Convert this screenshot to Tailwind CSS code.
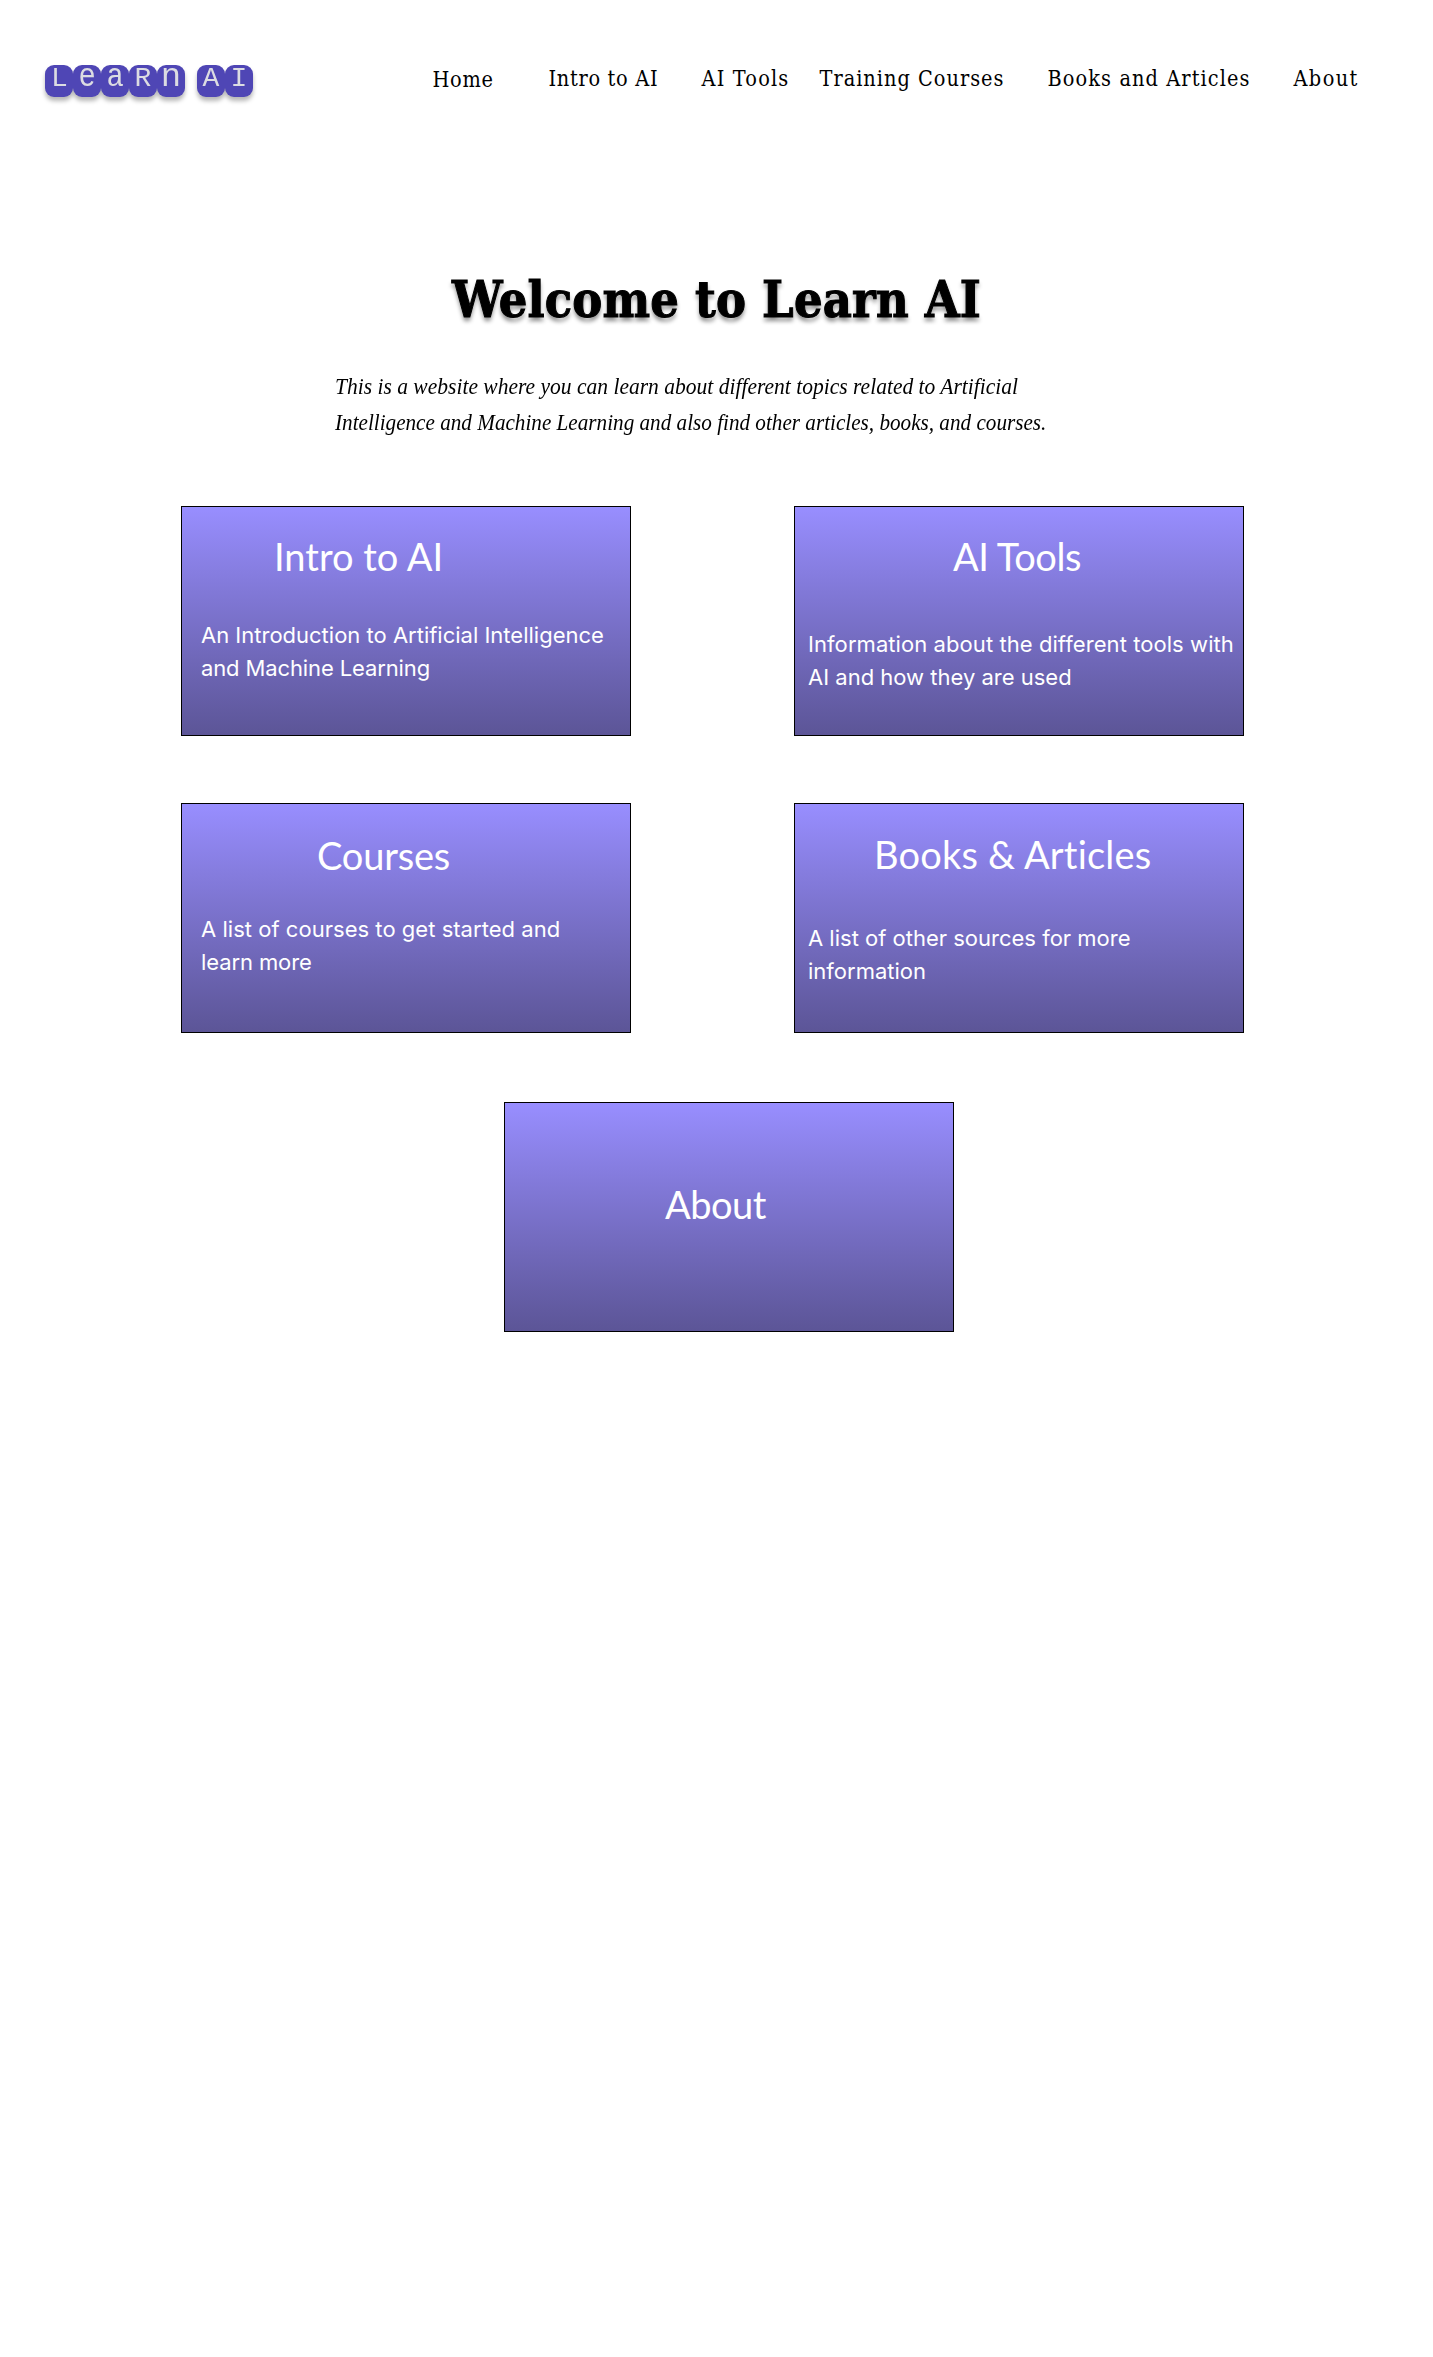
<!DOCTYPE html>
<html lang="en">
<head>
<meta charset="utf-8">
<title>Learn AI</title>
<script src="https://cdn.jsdelivr.net/npm/@tailwindcss/browser@4"></script>
</head>
<body class="min-h-[2357px] bg-white text-black">
<header class="flex items-start pt-[63px] pl-[45px]">
  <a class="mt-[2px] flex w-[208px] font-['Liberation_Mono',monospace] text-[28px] leading-[28px] text-[#dcdce2] drop-shadow-[0_4px_2px_rgba(0,0,0,0.28)]">
    <span class="h-8 w-7 rounded-[9px] bg-[#4f46b5] pl-[1px] text-center">L</span>
    <span class="h-8 w-7 rounded-[9px] bg-[#4f46b5] text-center text-[34px] leading-[25px]"><span class="inline-block scale-x-[0.85]">e</span></span>
    <span class="h-8 w-7 rounded-[9px] bg-[#4f46b5] text-center text-[34px] leading-[25px]"><span class="inline-block scale-x-[0.85]">a</span></span>
    <span class="h-8 w-7 rounded-[9px] bg-[#4f46b5] text-center">R</span>
    <span class="h-8 w-7 rounded-[9px] bg-[#4f46b5] text-center text-[34px] leading-[25px]">n</span>
    <span class="ml-3 h-8 w-7 rounded-[9px] bg-[#4f46b5] text-center">A</span>
    <span class="h-8 w-7 rounded-[9px] bg-[#4f46b5] text-center">I</span>
  </a>
  <nav class="ml-[179.5px] grid grid-cols-[116px_153px_118px_228px_246px_auto] font-['DejaVu_Serif_Condensed','DejaVu_Serif',serif] text-[21.5px] leading-8 font-stretch-condensed whitespace-nowrap">
    <a class="pt-px tracking-[0.7px]">Home</a>
    <a class="tracking-[0.7px]">Intro to AI</a>
    <a class="tracking-[1.2px]">AI Tools</a>
    <a class="tracking-[1px]">Training Courses</a>
    <a class="tracking-[1.1px]">Books and Articles</a>
    <a class="tracking-[1.4px]">About</a>
  </nav>
</header>
<main>
  <h1 class="mt-[173px] pl-[452px] font-['DejaVu_Serif_Condensed','DejaVu_Serif',serif] text-[50px] leading-[60px] font-bold tracking-[0.2px] whitespace-nowrap [-webkit-text-stroke:1px_black] [text-shadow:0_4px_4px_rgba(0,0,0,0.45)]">Welcome to Learn AI</h1>
  <p class="mt-[38px] ml-[334.5px] font-['Liberation_Serif',serif] text-2xl leading-9 whitespace-nowrap italic">
    <span class="block origin-left scale-x-[0.897]">This is a website where you can learn about different topics related to Artificial</span>
    <span class="block origin-left scale-x-[0.882]">Intelligence and Machine Learning and also find other articles, books, and courses.</span>
  </p>
  <section class="mt-[66px] ml-[181px] grid grid-cols-[450px_450px] gap-x-[163px] gap-y-[67px] font-['Inter',sans-serif] text-[22px] leading-[33px] text-white">
    <article class="h-[230px] border border-black bg-linear-to-b from-[#988eff] to-[#5c5597] pt-[25px] pl-[19px]">
      <h2 class="pl-[73px] font-['Lato',sans-serif] text-[38px] leading-[48px]">Intro to AI</h2>
      <p class="mt-[39px] whitespace-nowrap">An Introduction to Artificial Intelligence<br><span class="tracking-[-0.12px]">and Machine Learning</span></p>
    </article>
    <article class="h-[230px] border border-black bg-linear-to-b from-[#988eff] to-[#5c5597] pt-[25px] pl-[13px]">
      <h2 class="pl-[145px] font-['Lato',sans-serif] text-[38px] leading-[48px] tracking-[-0.4px]">AI Tools</h2>
      <p class="mt-[48px] whitespace-nowrap"><span class="tracking-[0.07px]">Information about the different tools with</span><br><span>AI and how they are used</span></p>
    </article>
    <article class="h-[230px] border border-black bg-linear-to-b from-[#988eff] to-[#5c5597] pt-[27px] pl-[19px]">
      <h2 class="pl-[116px] font-['Lato',sans-serif] text-[38px] leading-[48px] tracking-[-0.2px]">Courses</h2>
      <p class="mt-[34px] whitespace-nowrap"><span class="tracking-[0.03px]">A list of courses to get started and</span><br><span class="tracking-[-0.1px]">learn more</span></p>
    </article>
    <article class="h-[230px] border border-black bg-linear-to-b from-[#988eff] to-[#5c5597] pt-[26px] pl-[13px]">
      <h2 class="pl-[66px] font-['Lato',sans-serif] text-[38px] leading-[48px] tracking-[0.2px]">Books &amp; Articles</h2>
      <p class="mt-[44px] whitespace-nowrap">A list of other sources for more<br>information</p>
    </article>
  </section>
  <article class="mt-[69px] ml-[504px] h-[230px] w-[450px] border border-black bg-linear-to-b from-[#988eff] to-[#5c5597] pt-[77px] pl-[160px] text-white">
    <h2 class="font-['Lato',sans-serif] text-[38px] leading-[48px] tracking-[-0.5px]">About</h2>
  </article>
</main>
</body>
</html>
